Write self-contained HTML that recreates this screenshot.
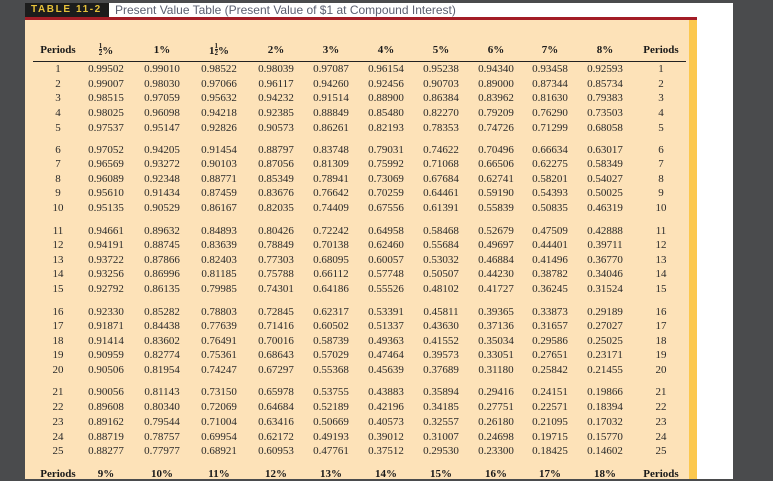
<!DOCTYPE html>
<html><head><meta charset="utf-8"><style>
*{margin:0;padding:0;box-sizing:border-box}
body{width:773px;height:479px;background:#4a4b4d;position:relative;overflow:hidden;font-family:"Liberation Serif",serif}
#page{position:absolute;left:25px;top:3px;width:708px;height:476px;background:#fff}
#tag{position:absolute;left:25px;top:3px;width:84px;height:14px;background:#1c1c1c;color:#e6c13a;font:bold 10px/14px "Liberation Sans",sans-serif;letter-spacing:1.6px;padding-left:6px;white-space:nowrap;overflow:hidden}
#ttl{position:absolute;left:115px;top:3px;font:12px/14px "Liberation Sans",sans-serif;color:#5a5f70;white-space:nowrap}
#red{position:absolute;left:25px;top:17px;width:672px;height:3px;background:#a31d26}
#bg{position:absolute;left:25px;top:20px;width:664px;height:459px;background:#fde2b8}
#yl{position:absolute;left:689px;top:20px;width:8px;height:459px;background:#fcc84e}
#ln{position:absolute;left:33px;top:61px;width:653px;height:1px;background:#222}
.r{position:absolute;left:0;height:14px;font-size:11px;line-height:14px;color:#2a2a2a}
.r span{position:absolute;width:56px;text-align:center;top:0}
.h{font-weight:bold;color:#1a1a1a}
.fr{display:inline-block;font-size:7px;line-height:6px;vertical-align:-1px;text-align:center}
.fr i{display:block;font-style:normal}
.fr i:first-child{border-bottom:0.6px solid #222}
.s0{left:30px}.s1{left:78px}.s2{left:134px}.s3{left:191px}.s4{left:248px}.s5{left:303px}.s6{left:358px}.s7{left:413px}.s8{left:468px}.s9{left:522px}.s10{left:577px}.s11{left:633px}
</style></head><body>
<div id="page"></div>
<div id="bg"></div><div id="yl"></div><div id="red"></div>
<div id="tag">TABLE 11-2</div>
<div id="ttl">Present Value Table (Present Value of $1 at Compound Interest)</div>
<div class="r h" style="top:43px"><span class="s0">Periods</span><span class="s1"><span class="fr" style="position:static;width:auto"><i>1</i><i>2</i></span>%</span><span class="s2">1%</span><span class="s3">1<span class="fr" style="position:static;width:auto"><i>1</i><i>2</i></span>%</span><span class="s4">2%</span><span class="s5">3%</span><span class="s6">4%</span><span class="s7">5%</span><span class="s8">6%</span><span class="s9">7%</span><span class="s10">8%</span><span class="s11">Periods</span></div>
<div id="ln"></div>
<div class="r" style="top:62px"><span class="s0">1</span><span class="s1">0.99502</span><span class="s2">0.99010</span><span class="s3">0.98522</span><span class="s4">0.98039</span><span class="s5">0.97087</span><span class="s6">0.96154</span><span class="s7">0.95238</span><span class="s8">0.94340</span><span class="s9">0.93458</span><span class="s10">0.92593</span><span class="s11">1</span></div>
<div class="r" style="top:77px"><span class="s0">2</span><span class="s1">0.99007</span><span class="s2">0.98030</span><span class="s3">0.97066</span><span class="s4">0.96117</span><span class="s5">0.94260</span><span class="s6">0.92456</span><span class="s7">0.90703</span><span class="s8">0.89000</span><span class="s9">0.87344</span><span class="s10">0.85734</span><span class="s11">2</span></div>
<div class="r" style="top:91px"><span class="s0">3</span><span class="s1">0.98515</span><span class="s2">0.97059</span><span class="s3">0.95632</span><span class="s4">0.94232</span><span class="s5">0.91514</span><span class="s6">0.88900</span><span class="s7">0.86384</span><span class="s8">0.83962</span><span class="s9">0.81630</span><span class="s10">0.79383</span><span class="s11">3</span></div>
<div class="r" style="top:106px"><span class="s0">4</span><span class="s1">0.98025</span><span class="s2">0.96098</span><span class="s3">0.94218</span><span class="s4">0.92385</span><span class="s5">0.88849</span><span class="s6">0.85480</span><span class="s7">0.82270</span><span class="s8">0.79209</span><span class="s9">0.76290</span><span class="s10">0.73503</span><span class="s11">4</span></div>
<div class="r" style="top:121px"><span class="s0">5</span><span class="s1">0.97537</span><span class="s2">0.95147</span><span class="s3">0.92826</span><span class="s4">0.90573</span><span class="s5">0.86261</span><span class="s6">0.82193</span><span class="s7">0.78353</span><span class="s8">0.74726</span><span class="s9">0.71299</span><span class="s10">0.68058</span><span class="s11">5</span></div>
<div class="r" style="top:143px"><span class="s0">6</span><span class="s1">0.97052</span><span class="s2">0.94205</span><span class="s3">0.91454</span><span class="s4">0.88797</span><span class="s5">0.83748</span><span class="s6">0.79031</span><span class="s7">0.74622</span><span class="s8">0.70496</span><span class="s9">0.66634</span><span class="s10">0.63017</span><span class="s11">6</span></div>
<div class="r" style="top:157px"><span class="s0">7</span><span class="s1">0.96569</span><span class="s2">0.93272</span><span class="s3">0.90103</span><span class="s4">0.87056</span><span class="s5">0.81309</span><span class="s6">0.75992</span><span class="s7">0.71068</span><span class="s8">0.66506</span><span class="s9">0.62275</span><span class="s10">0.58349</span><span class="s11">7</span></div>
<div class="r" style="top:172px"><span class="s0">8</span><span class="s1">0.96089</span><span class="s2">0.92348</span><span class="s3">0.88771</span><span class="s4">0.85349</span><span class="s5">0.78941</span><span class="s6">0.73069</span><span class="s7">0.67684</span><span class="s8">0.62741</span><span class="s9">0.58201</span><span class="s10">0.54027</span><span class="s11">8</span></div>
<div class="r" style="top:186px"><span class="s0">9</span><span class="s1">0.95610</span><span class="s2">0.91434</span><span class="s3">0.87459</span><span class="s4">0.83676</span><span class="s5">0.76642</span><span class="s6">0.70259</span><span class="s7">0.64461</span><span class="s8">0.59190</span><span class="s9">0.54393</span><span class="s10">0.50025</span><span class="s11">9</span></div>
<div class="r" style="top:201px"><span class="s0">10</span><span class="s1">0.95135</span><span class="s2">0.90529</span><span class="s3">0.86167</span><span class="s4">0.82035</span><span class="s5">0.74409</span><span class="s6">0.67556</span><span class="s7">0.61391</span><span class="s8">0.55839</span><span class="s9">0.50835</span><span class="s10">0.46319</span><span class="s11">10</span></div>
<div class="r" style="top:224px"><span class="s0">11</span><span class="s1">0.94661</span><span class="s2">0.89632</span><span class="s3">0.84893</span><span class="s4">0.80426</span><span class="s5">0.72242</span><span class="s6">0.64958</span><span class="s7">0.58468</span><span class="s8">0.52679</span><span class="s9">0.47509</span><span class="s10">0.42888</span><span class="s11">11</span></div>
<div class="r" style="top:238px"><span class="s0">12</span><span class="s1">0.94191</span><span class="s2">0.88745</span><span class="s3">0.83639</span><span class="s4">0.78849</span><span class="s5">0.70138</span><span class="s6">0.62460</span><span class="s7">0.55684</span><span class="s8">0.49697</span><span class="s9">0.44401</span><span class="s10">0.39711</span><span class="s11">12</span></div>
<div class="r" style="top:253px"><span class="s0">13</span><span class="s1">0.93722</span><span class="s2">0.87866</span><span class="s3">0.82403</span><span class="s4">0.77303</span><span class="s5">0.68095</span><span class="s6">0.60057</span><span class="s7">0.53032</span><span class="s8">0.46884</span><span class="s9">0.41496</span><span class="s10">0.36770</span><span class="s11">13</span></div>
<div class="r" style="top:267px"><span class="s0">14</span><span class="s1">0.93256</span><span class="s2">0.86996</span><span class="s3">0.81185</span><span class="s4">0.75788</span><span class="s5">0.66112</span><span class="s6">0.57748</span><span class="s7">0.50507</span><span class="s8">0.44230</span><span class="s9">0.38782</span><span class="s10">0.34046</span><span class="s11">14</span></div>
<div class="r" style="top:282px"><span class="s0">15</span><span class="s1">0.92792</span><span class="s2">0.86135</span><span class="s3">0.79985</span><span class="s4">0.74301</span><span class="s5">0.64186</span><span class="s6">0.55526</span><span class="s7">0.48102</span><span class="s8">0.41727</span><span class="s9">0.36245</span><span class="s10">0.31524</span><span class="s11">15</span></div>
<div class="r" style="top:305px"><span class="s0">16</span><span class="s1">0.92330</span><span class="s2">0.85282</span><span class="s3">0.78803</span><span class="s4">0.72845</span><span class="s5">0.62317</span><span class="s6">0.53391</span><span class="s7">0.45811</span><span class="s8">0.39365</span><span class="s9">0.33873</span><span class="s10">0.29189</span><span class="s11">16</span></div>
<div class="r" style="top:319px"><span class="s0">17</span><span class="s1">0.91871</span><span class="s2">0.84438</span><span class="s3">0.77639</span><span class="s4">0.71416</span><span class="s5">0.60502</span><span class="s6">0.51337</span><span class="s7">0.43630</span><span class="s8">0.37136</span><span class="s9">0.31657</span><span class="s10">0.27027</span><span class="s11">17</span></div>
<div class="r" style="top:334px"><span class="s0">18</span><span class="s1">0.91414</span><span class="s2">0.83602</span><span class="s3">0.76491</span><span class="s4">0.70016</span><span class="s5">0.58739</span><span class="s6">0.49363</span><span class="s7">0.41552</span><span class="s8">0.35034</span><span class="s9">0.29586</span><span class="s10">0.25025</span><span class="s11">18</span></div>
<div class="r" style="top:348px"><span class="s0">19</span><span class="s1">0.90959</span><span class="s2">0.82774</span><span class="s3">0.75361</span><span class="s4">0.68643</span><span class="s5">0.57029</span><span class="s6">0.47464</span><span class="s7">0.39573</span><span class="s8">0.33051</span><span class="s9">0.27651</span><span class="s10">0.23171</span><span class="s11">19</span></div>
<div class="r" style="top:363px"><span class="s0">20</span><span class="s1">0.90506</span><span class="s2">0.81954</span><span class="s3">0.74247</span><span class="s4">0.67297</span><span class="s5">0.55368</span><span class="s6">0.45639</span><span class="s7">0.37689</span><span class="s8">0.31180</span><span class="s9">0.25842</span><span class="s10">0.21455</span><span class="s11">20</span></div>
<div class="r" style="top:385px"><span class="s0">21</span><span class="s1">0.90056</span><span class="s2">0.81143</span><span class="s3">0.73150</span><span class="s4">0.65978</span><span class="s5">0.53755</span><span class="s6">0.43883</span><span class="s7">0.35894</span><span class="s8">0.29416</span><span class="s9">0.24151</span><span class="s10">0.19866</span><span class="s11">21</span></div>
<div class="r" style="top:400px"><span class="s0">22</span><span class="s1">0.89608</span><span class="s2">0.80340</span><span class="s3">0.72069</span><span class="s4">0.64684</span><span class="s5">0.52189</span><span class="s6">0.42196</span><span class="s7">0.34185</span><span class="s8">0.27751</span><span class="s9">0.22571</span><span class="s10">0.18394</span><span class="s11">22</span></div>
<div class="r" style="top:415px"><span class="s0">23</span><span class="s1">0.89162</span><span class="s2">0.79544</span><span class="s3">0.71004</span><span class="s4">0.63416</span><span class="s5">0.50669</span><span class="s6">0.40573</span><span class="s7">0.32557</span><span class="s8">0.26180</span><span class="s9">0.21095</span><span class="s10">0.17032</span><span class="s11">23</span></div>
<div class="r" style="top:430px"><span class="s0">24</span><span class="s1">0.88719</span><span class="s2">0.78757</span><span class="s3">0.69954</span><span class="s4">0.62172</span><span class="s5">0.49193</span><span class="s6">0.39012</span><span class="s7">0.31007</span><span class="s8">0.24698</span><span class="s9">0.19715</span><span class="s10">0.15770</span><span class="s11">24</span></div>
<div class="r" style="top:444px"><span class="s0">25</span><span class="s1">0.88277</span><span class="s2">0.77977</span><span class="s3">0.68921</span><span class="s4">0.60953</span><span class="s5">0.47761</span><span class="s6">0.37512</span><span class="s7">0.29530</span><span class="s8">0.23300</span><span class="s9">0.18425</span><span class="s10">0.14602</span><span class="s11">25</span></div>
<div class="r h" style="top:467px"><span class="s0">Periods</span><span class="s1">9%</span><span class="s2">10%</span><span class="s3">11%</span><span class="s4">12%</span><span class="s5">13%</span><span class="s6">14%</span><span class="s7">15%</span><span class="s8">16%</span><span class="s9">17%</span><span class="s10">18%</span><span class="s11">Periods</span></div>
</body></html>
